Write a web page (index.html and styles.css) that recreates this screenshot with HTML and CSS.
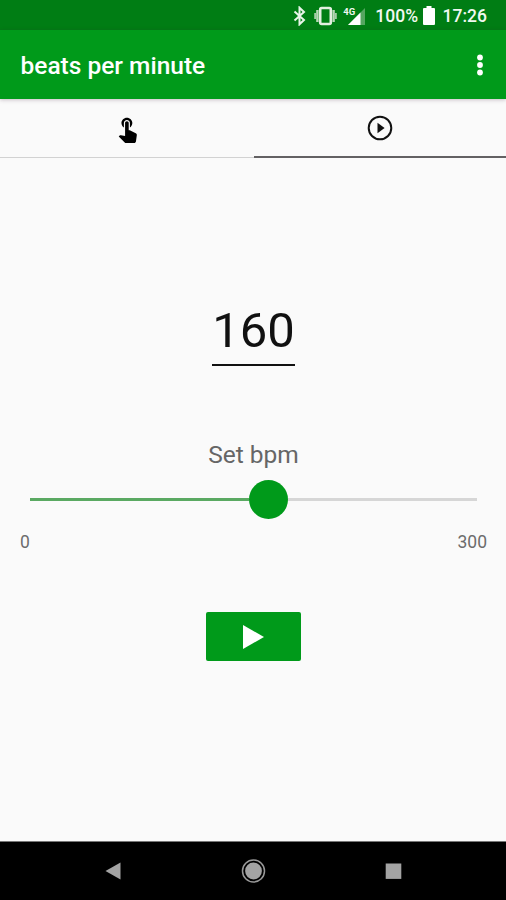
FILE: index.html
```
<!DOCTYPE html>
<html lang="en">
<head>
    <meta charset="UTF-8">
    <meta name="viewport" content="width=device-width, initial-scale=1.0">
    <title>beats per minute</title>
    <link rel="stylesheet" href="styles.css">
</head>
<body>
    <div class="status-bar">
        <svg class="bluetooth" width="13" height="20" viewBox="0 0 12 20">
            <path d="M1 5.5L10.5 14L6 18.3V1.7L10.5 6L1 14.5" fill="none" stroke="#e8f5e9" stroke-width="2"/>
        </svg>
        <svg class="vibrate" width="23" height="20" viewBox="0 0 23 20">
            <rect x="6.2" y="2" width="10.6" height="16" rx="1.5" fill="none" stroke="#e3efe0" stroke-width="2.6"/>
            <path d="M3.4 4V16M19.6 4V16" stroke="#b9d8b8" stroke-width="2.4"/>
            <path d="M1.2 7V13M21.8 7V13" stroke="#a5cda6" stroke-width="2"/>
        </svg>
        <div class="signal">
            <svg width="17" height="17" viewBox="0 0 17 17">
                <path d="M17 0V17H0Z" fill="#55a660"/>
                <path d="M12.5 4.5V17H0Z" fill="#fff"/>
            </svg>
            <span class="network">4G</span>
        </div>
        <span class="percent">100%</span>
        <svg class="battery" width="12" height="19" viewBox="0 0 12 19">
            <path d="M3.5 0H8.5V2H11Q12 2 12 3V18Q12 19 11 19H1Q0 19 0 18V3Q0 2 1 2H3.5Z" fill="#fff"/>
        </svg>
        <span class="clock">17:26</span>
    </div>

    <header class="app-bar">
        <h1 class="title">beats per minute</h1>
        <button class="menu-button" aria-label="More options">
            <svg width="8" height="22" viewBox="0 0 8 22">
                <circle cx="4" cy="3.5" r="2.9" fill="#fff"/>
                <circle cx="4" cy="11" r="2.9" fill="#fff"/>
                <circle cx="4" cy="18.5" r="2.9" fill="#fff"/>
            </svg>
        </button>
    </header>

    <nav class="tabs">
        <button class="tab" aria-label="Tap">
            <svg class="tap-icon" width="29" height="29" viewBox="0 0 24 24">
                <path d="M9 11.24V7.5C9 6.12 10.12 5 11.5 5S14 6.12 14 7.5v3.74c1.21-.81 2-2.18 2-3.74C16 5.01 13.99 3 11.5 3S7 5.01 7 7.5c0 1.56.79 2.93 2 3.74zm9.84 4.63l-4.54-2.26c-.17-.07-.35-.11-.54-.11H13v-6c0-.83-.67-1.5-1.5-1.5S10 6.67 10 7.5v10.74l-3.43-.72c-.08-.01-.15-.03-.24-.03-.31 0-.59.13-.79.33l-.79.8 4.94 4.94c.27.27.65.44 1.06.44h6.79c.75 0 1.33-.55 1.44-1.28l.75-5.27c.01-.07.02-.14.02-.2 0-.62-.38-1.16-.91-1.38z"/>
            </svg>
        </button>
        <button class="tab active" aria-label="Play">
            <svg width="26" height="26" viewBox="0 0 26 26">
                <circle cx="13" cy="13" r="11.3" fill="none" stroke="#111" stroke-width="2"/>
                <path d="M10.5 7.8L17.6 13L10.5 18.2Z" fill="#111"/>
            </svg>
        </button>
    </nav>

    <main class="content">
        <div class="bpm">160</div>
        <div class="label">Set bpm</div>
        <div class="slider">
            <div class="slider-fill"></div>
            <div class="thumb"></div>
            <div class="slider-rest"></div>
        </div>
        <div class="range">
            <span>0</span>
            <span>300</span>
        </div>
        <button class="play-button" aria-label="Start">
            <svg width="21" height="24" viewBox="0 0 21 24">
                <path d="M0 0L21 12L0 24Z" fill="#fff"/>
            </svg>
        </button>
    </main>

    <footer class="nav-bar">
        <svg width="24" height="24" viewBox="0 0 24 24">
            <path d="M4.5 12L19.5 3.5V20.5Z" fill="#a3a3a3"/>
        </svg>
        <svg width="25" height="24" viewBox="0 0 25 24">
            <circle cx="12.5" cy="12" r="11" fill="none" stroke="#999" stroke-width="1.5"/>
            <circle cx="12.5" cy="12" r="8.4" fill="#a3a3a3"/>
        </svg>
        <svg width="24" height="24" viewBox="0 0 24 24">
            <rect x="4.7" y="4.5" width="15.6" height="15.4" fill="#a3a3a3"/>
        </svg>
    </footer>
</body>
</html>
```

FILE: styles.css
```
* {
    box-sizing: border-box;
}

body {
    margin: 0;
    height: 900px;
    display: flex;
    flex-direction: column;
    font-family: Roboto, sans-serif;
    background: #fafafa;
    overflow: hidden;
}

button {
    padding: 0;
    border: none;
    background: none;
    display: flex;
    justify-content: center;
    align-items: center;
    cursor: pointer;
}

svg {
    display: block;
    flex: none;
}

.status-bar {
    height: 30px;
    padding: 2px 19px 0 0;
    display: flex;
    justify-content: flex-end;
    align-items: center;
    background: #007d14;
    color: #f1f8f1;
    font-size: 17.5px;
    font-weight: 500;
}

.vibrate {
    margin-left: 8px;
}

.signal {
    position: relative;
    width: 22px;
    margin-left: 6px;
    display: flex;
    justify-content: flex-end;
}

.network {
    position: absolute;
    left: 0;
    top: -1px;
    font-size: 9.5px;
    line-height: 9px;
    font-weight: 700;
}

.percent {
    margin-left: 10px;
}

.battery {
    margin: 0 0 1px 5px;
}

.clock {
    margin-left: 7.5px;
}

.app-bar {
    position: relative;
    height: 69px;
    padding: 0 22.5px 0 20.5px;
    display: flex;
    justify-content: space-between;
    align-items: center;
    background: #009a1a;
    box-shadow: 0 1px 4px rgba(60, 20, 50, 0.25);
}

.title {
    margin: 2px 0 0;
    color: #fff;
    font-size: 24.5px;
    font-weight: 500;
}

.tabs {
    height: 59px;
    display: grid;
    grid-template-columns: 254px 1fr;
}

.tab {
    border-bottom: 1px solid #d2d2d2;
}

.tab.active {
    border-bottom: 2px solid #636163;
}

.tap-icon {
    margin-top: 1px;
}

.content {
    flex: 1;
    padding: 144px 19px 0 20px;
    display: flex;
    flex-direction: column;
    align-items: center;
}

.bpm {
    width: 83px;
    height: 64px;
    border-bottom: 2px solid #111;
    color: #111;
    font-size: 49px;
    line-height: 58px;
    text-align: center;
}

.label {
    margin-top: 73px;
    color: #666;
    font-size: 24.5px;
    line-height: 32px;
}

.slider {
    width: 447px;
    height: 39px;
    margin-top: 9px;
    display: flex;
    align-items: center;
}

.slider-fill {
    width: 219px;
    height: 3px;
    background: #5aa962;
}

.thumb {
    width: 39px;
    height: 39px;
    border-radius: 50%;
    background: #009a1a;
}

.slider-rest {
    flex: 1;
    height: 3px;
    background: #d6d6d6;
}

.range {
    align-self: stretch;
    margin-top: 13px;
    display: flex;
    justify-content: space-between;
    color: #6c6c6c;
    font-size: 17.5px;
    line-height: 20px;
}

.play-button {
    width: 95px;
    height: 49px;
    margin-top: 60px;
    border-radius: 2px;
    background: #009a1a;
}

.nav-bar {
    height: 59px;
    padding: 0 101px;
    display: flex;
    justify-content: space-between;
    align-items: center;
    background: #000;
    border-top: 1px solid #777;
}
```
